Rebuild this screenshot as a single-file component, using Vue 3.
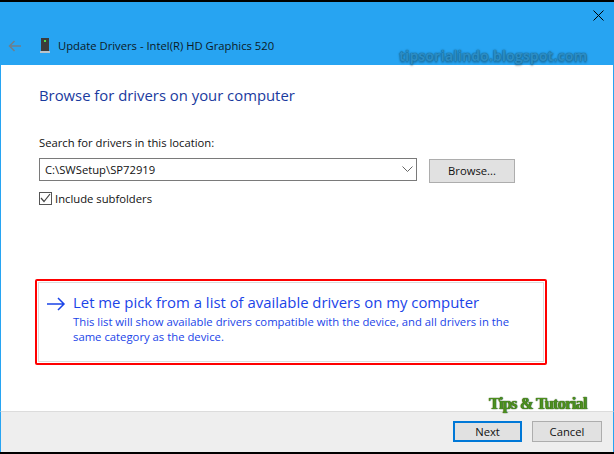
<script setup>
const title = 'Update Drivers - Intel(R) HD Graphics 520'
</script>

<template>
  <div class="window">
    <header class="head">
      <button class="close" aria-label="Close">
        <svg width="11" height="11" viewBox="0 0 11 11"><path d="M.5.5l10 10M10.5.5l-10 10" stroke="#000" fill="none" /></svg>
      </button>
      <div class="titlebar">
        <svg class="back" width="14" height="12" viewBox="0 0 14 12"><path d="M13 6H1.5M6.500 1l-5 5 5 5" stroke="#6f7f8a" stroke-width="1.500" fill="none" /></svg>
        <svg class="device" width="10" height="15" viewBox="0 0 10 15">
          <rect x="1" y="0" width="8" height="13" fill="#3b3b3b" />
          <rect x="4" y="2" width="2" height="2" fill="#4fe04f" />
          <rect x="0" y="13" width="10" height="2" fill="#b8c4cc" />
        </svg>
        <span class="title">{{ title }}</span>
      </div>
      <span class="mark">tipsorialindo.blogspot.com</span>
    </header>

    <main class="body">
      <h1>Browse for drivers on your computer</h1>
      <label class="lbl">Search for drivers in this location:</label>
      <div class="row">
        <div class="combo">
          <span>C:\SWSetup\SP72919</span>
          <svg width="11" height="6" viewBox="0 0 11 6"><path d="M.5.500l5 5 5-5" stroke="#666" fill="none" /></svg>
        </div>
        <button class="btn browse">Browse...</button>
      </div>
      <div class="check">
        <span class="box">
          <svg width="11" height="10" viewBox="0 0 11 10"><path d="M1 5l3 3.500L10 1" stroke="#444" stroke-width="1.200" fill="none" /></svg>
        </span>
        <span>Include subfolders</span>
      </div>
      <div class="red">
        <div class="link">
          <svg class="arrow" width="19" height="14" viewBox="0 0 19 14"><path d="M0 7h17M11 1l6 6-6 6" stroke="#1a44e8" stroke-width="1.500" fill="none" /></svg>
          <div>
            <div class="link-title">Let me pick from a list of available drivers on my computer</div>
            <p>This list will show available drivers compatible with the device, and all drivers in the<br>same category as the device.</p>
          </div>
        </div>
      </div>
      <span class="brand">Tips &amp; Tutorial</span>
    </main>

    <footer class="foot">
      <button class="btn next">Next</button>
      <button class="btn cancel">Cancel</button>
    </footer>
  </div>
</template>

<style>
html, body { margin: 0; background: #000; }
</style>

<style scoped>
.window {
  width: 614px;
  height: 454px;
  box-sizing: border-box;
  border-top: 2px solid #000;
  border-bottom: 2px solid #000;
  background: #fff;
  display: flex;
  flex-direction: column;
  position: relative;
  overflow: hidden;
  font-family: "Open Sans", "Noto Sans", sans-serif;
  font-size: 11.250px;
  color: #111;
}
.head {
  height: 63px;
  background: #27a4f2;
  position: relative;
  display: flex;
  flex-direction: column;
  justify-content: flex-end;
  flex: none;
}
.close {
  position: absolute;
  right: 10px;
  top: 8px;
  padding: 0;
  border: 0;
  background: none;
  line-height: 0;
}
.titlebar {
  display: flex;
  align-items: center;
  height: 27px;
  margin-bottom: 6px;
  padding-left: 8px;
}
.device { margin-left: 18px; margin-right: 8px; }
.title { font-size: 11.250px; color: #0d1a26; white-space: nowrap; }
.mark {
  position: absolute;
  left: 399px;
  top: 44px;
  font-family: "Open Sans", sans-serif;
  font-weight: 700;
  font-size: 14.100px;
  line-height: 20px;
  color: #2b8cc4;
  white-space: nowrap;
  text-shadow: 0 0 2px #17658f, 0 0 1px #17658f, 0 2px 2px rgba(0,0,0,.25);
}
.body {
  flex: 1;
  position: relative;
  padding: 20px 0 0 38px;
  border-left: 1px solid #27a4f2;
  border-right: 1px solid #27a4f2;
  box-sizing: border-box;
}
h1 {
  margin: 0;
  font-size: 14.850px;
  font-weight: 400;
  line-height: 20px;
  color: #1a3a9e;
}
.lbl {
  display: block;
  margin-top: 30px;
  line-height: 16px;
}
.row {
  display: flex;
  align-items: flex-start;
  gap: 12px;
  margin-top: 7px;
}
.combo {
  width: 378px;
  height: 23px;
  box-sizing: border-box;
  border: 1px solid #7a7a7a;
  display: flex;
  align-items: center;
  justify-content: space-between;
  padding: 0 3px 1px 5px;
}
.btn {
  font: inherit;
  color: #111;
  padding: 0;
  background: #e1e1e1;
  border: 1px solid #adadad;
  box-sizing: border-box;
}
.browse {
  width: 86px;
  height: 24px;
  margin-top: 1px;
  padding-bottom: 2px;
}
.check {
  display: flex;
  align-items: center;
  gap: 3px;
  margin-top: 8px;
  height: 14px;
}
.box {
  width: 13px;
  height: 13px;
  border: 1px solid #555;
  box-sizing: border-box;
  display: flex;
  align-items: center;
  justify-content: center;
}
.red {
  width: 512px;
  height: 86px;
  margin: 74px 0 0 -4px;
  box-sizing: border-box;
  border: 2px solid #f00;
  border-radius: 2px;
  padding: 1px;
}
.link {
  height: 100%;
  box-sizing: border-box;
  border: 1px solid #dcdcdc;
  display: flex;
  align-items: flex-start;
  gap: 7px;
  padding: 9px 0 0 8px;
  color: #1a44e8;
}
.arrow { margin-top: 5px; flex: none; }
.link-title {
  font-size: 14.900px;
  line-height: 20px;
  white-space: nowrap;
}
p {
  margin: 2px 0 0;
  font-size: 11.300px;
  line-height: 15px;
  white-space: nowrap;
}
.brand {
  position: absolute;
  left: 488px;
  top: 329px;
  font-family: "Liberation Serif", serif;
  font-weight: 700;
  font-size: 16.500px;
  letter-spacing: -.8px;
  line-height: 20px;
  color: #4d8f1e;
  white-space: nowrap;
  text-shadow: 0 0 1px #1f4a0d, 0 0 1px #1f4a0d;
}
.foot {
  height: 41px;
  flex: none;
  box-sizing: border-box;
  background: #eee;
  border-top: 1px solid #dcdcdc;
  border-left: 1px solid #27a4f2;
  border-right: 1px solid #27a4f2;
  display: flex;
  justify-content: flex-end;
  gap: 10px;
  padding: 9px 11px 0 0;
}
.next, .cancel { width: 70px; height: 21px; }
.next { width: 69px; border: 2px solid #0078d7; }
</style>
